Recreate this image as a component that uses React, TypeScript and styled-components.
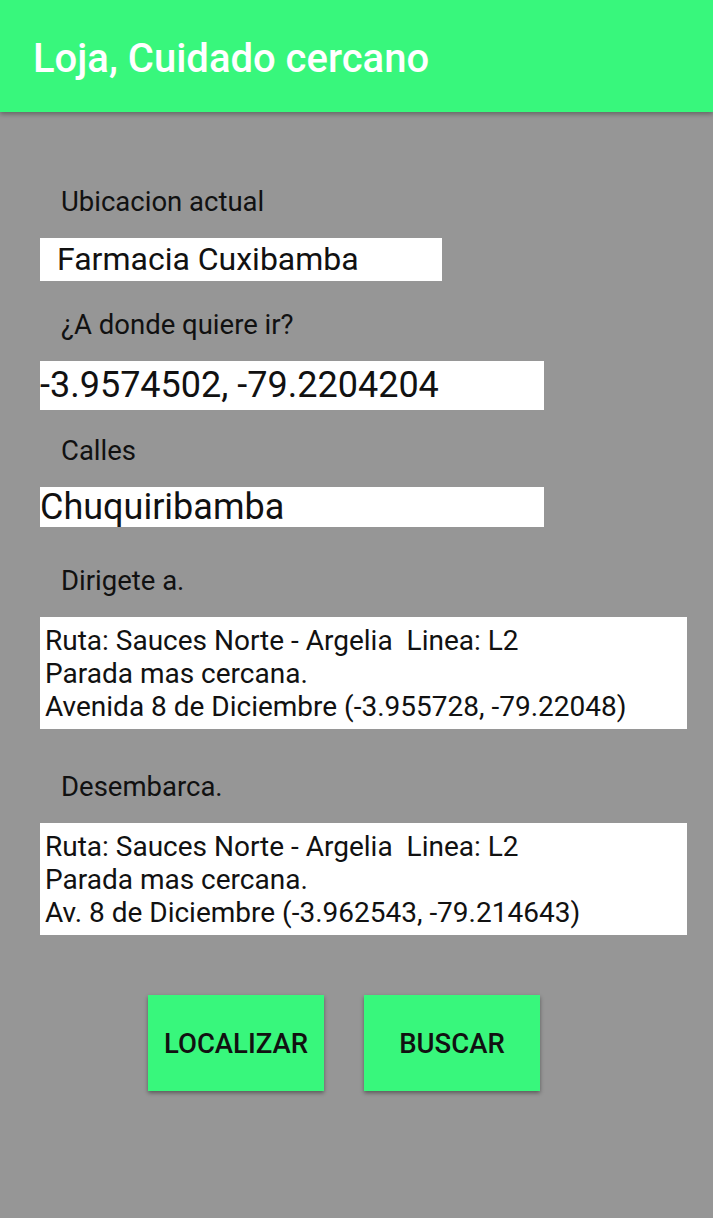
import { ReactElement } from "react";
import styled, { createGlobalStyle } from "styled-components";

const GlobalStyle = createGlobalStyle`
  body {
    margin: 0;
    background: #969696;
    font-family: Roboto, "Liberation Sans", sans-serif;
  }
`;

const Screen = styled.div`
  width: 713px;
  min-height: 1218px;
  background: #969696;
`;

const AppBar = styled.header`
  height: 112px;
  background: #38f77c;
  box-shadow: 0 2px 5px rgba(0, 0, 0, 0.35);
  display: flex;
  align-items: center;
  padding-left: 33px;
  box-sizing: border-box;
`;

const Title = styled.h1`
  margin: 4px 0 0;
  font-size: 40px;
  font-weight: 500;
  color: #ffffff;
`;

const Content = styled.main`
  padding: 0 26px 0 40px;
  display: flex;
  flex-direction: column;
`;

const Label = styled.div<{ $top: number }>`
  margin-top: ${(p) => p.$top}px;
  margin-bottom: 22px;
  padding-left: 21px;
  font-size: 27.5px;
  line-height: 28px;
  color: #111;
`;

const Field = styled.div<{ $width: number; $height: number; $size: number; $indent: number }>`
  width: ${(p) => p.$width}px;
  height: ${(p) => p.$height}px;
  background: #fff;
  box-sizing: border-box;
  padding-left: ${(p) => p.$indent}px;
  font-size: ${(p) => p.$size}px;
  line-height: ${(p) => p.$height}px;
  color: #111;
  white-space: nowrap;
`;

const InfoBox = styled.div`
  width: 647px;
  height: 112px;
  background: #fff;
  box-sizing: border-box;
  padding: 7px 0 0 5px;
  font-size: 28px;
  line-height: 33px;
  color: #111;
  white-space: pre;
`;

const ButtonRow = styled.div`
  display: flex;
  gap: 40px;
  margin-top: 60px;
  padding-left: 108px;
`;

const Button = styled.button`
  width: 176px;
  height: 96px;
  border: none;
  background: #38f77c;
  box-shadow: 0 2px 4px rgba(0, 0, 0, 0.4);
  font-family: Roboto, "Liberation Sans", sans-serif;
  font-size: 27.5px;
  font-weight: 500;
  color: #111;
  padding: 0;
`;

function App(): ReactElement {
  return (
    <Screen>
      <GlobalStyle />
      <AppBar>
        <Title>Loja, Cuidado cercano</Title>
      </AppBar>
      <Content>
        <Label $top={76}>Ubicacion actual</Label>
        <Field $width={402} $height={43} $size={32} $indent={17}>
          Farmacia Cuxibamba
        </Field>
        <Label $top={30}>¿A donde quiere ir?</Label>
        <Field $width={504} $height={49} $size={36} $indent={0}>
          -3.9574502, -79.2204204
        </Field>
        <Label $top={27}>Calles</Label>
        <Field $width={504} $height={40} $size={36} $indent={0}>
          Chuquiribamba
        </Field>
        <Label $top={40}>Dirigete a.</Label>
        <InfoBox>
          {"Ruta: Sauces Norte - Argelia  Linea: L2\nParada mas cercana.\nAvenida 8 de Diciembre (-3.955728, -79.22048)"}
        </InfoBox>
        <Label $top={44}>Desembarca.</Label>
        <InfoBox>
          {"Ruta: Sauces Norte - Argelia  Linea: L2\nParada mas cercana.\nAv. 8 de Diciembre (-3.962543, -79.214643)"}
        </InfoBox>
        <ButtonRow>
          <Button>LOCALIZAR</Button>
          <Button>BUSCAR</Button>
        </ButtonRow>
      </Content>
    </Screen>
  );
}

export default App;
